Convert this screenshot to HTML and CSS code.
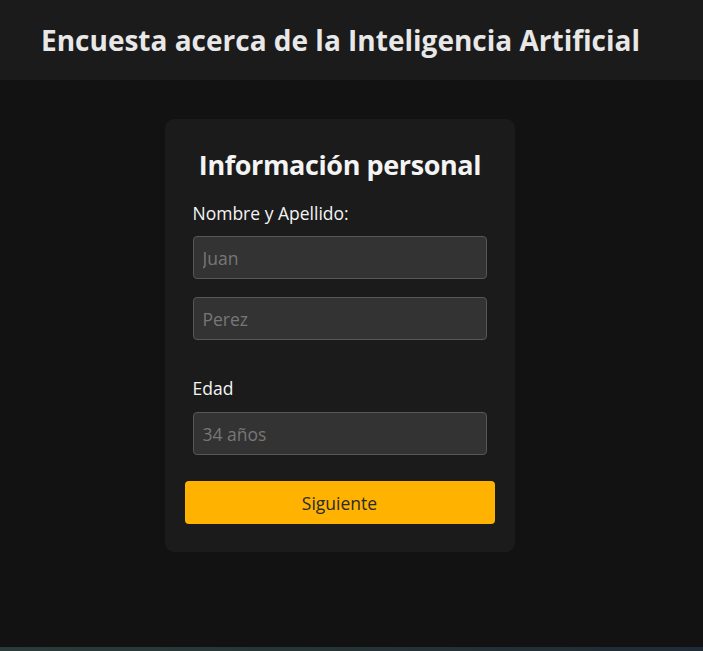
FILE: index.html
```html
<!DOCTYPE html>
<html lang="es">
<head>
<meta charset="utf-8">
<title>Encuesta</title>
<link rel="stylesheet" href="styles.css">
</head>
<body>
<header class="topbar">
  <h1 class="site-title">Encuesta acerca de la Inteligencia Artificial</h1>
</header>
<main class="main">
  <form class="card">
    <h2 class="card-title">Información personal</h2>
    <label class="label">Nombre y Apellido:</label>
    <input class="field" type="text" placeholder="Juan">
    <input class="field field-gap" type="text" placeholder="Perez">
    <label class="label label-edad">Edad</label>
    <input class="field" type="text" placeholder="34 años">
    <button class="btn" type="button">Siguiente</button>
  </form>
</main>
<footer class="bottom-strip"></footer>
</body>
</html>
```

FILE: styles.css
```css
* { box-sizing: border-box; }
html, body { margin: 0; padding: 0; }
body {
  background: #121212;
  color: #f2f2f2;
  font-family: "Open Sans", "Noto Sans", sans-serif;
  height: 651px;
  display: flex;
  flex-direction: column;
  overflow: hidden;
}
.topbar {
  background: #1b1b1b;
  height: 80px;
  display: flex;
  align-items: center;
  padding-left: 41px;
}
.site-title {
  margin: 0;
  font-size: 28px;
  line-height: 38px;
  font-weight: 700;
  color: #e8e8e8;
}
.main {
  flex: 1;
  display: flex;
  justify-content: center;
  align-items: flex-start;
  padding-top: 39px;
  padding-right: 24px;
}
.card {
  width: 350px;
  background: #1b1b1b;
  border-radius: 9px;
  padding: 27px 20px 28px 28px;
  display: flex;
  flex-direction: column;
}
.card-title {
  margin: 0 0 18px -7px;
  font-size: 27px;
  line-height: 37px;
  font-weight: 700;
  text-align: center;
  color: #f4f4f4;
  letter-spacing: -0.4px;
}
.label {
  font-size: 17.5px;
  line-height: 24px;
  color: #f4f4f4;
  margin-bottom: 11px;
}
.label-edad { margin-top: 36px; margin-bottom: 12px; }
.field {
  width: 294px;
  height: 43px;
  background: #333333;
  border: 1px solid #575757;
  border-radius: 4px;
  padding: 0 9px;
  font-family: inherit;
  font-size: 17.5px;
  color: #ddd;
}
.field::placeholder { color: #777; }
.field-gap { margin-top: 18px; }
.btn {
  margin: 26px 0 0 -8px;
  width: 310px;
  height: 43px;
  background: #ffb300;
  border: none;
  border-radius: 4px;
  font-family: inherit;
  font-size: 17.5px;
  color: #2a2a2a;
}
.bottom-strip {
  height: 4px;
  background: linear-gradient(90deg, #2b3b3a, #243237 60%, #1f2b36);
}
```
